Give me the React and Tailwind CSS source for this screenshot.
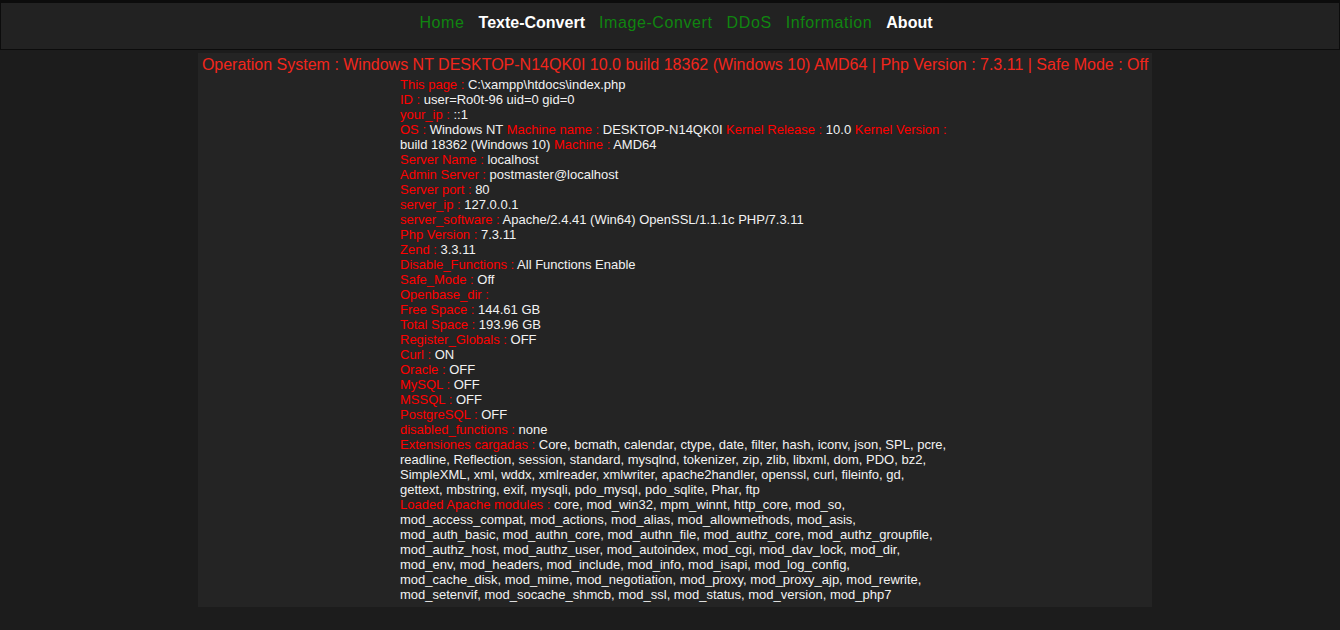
import React from 'react';

const navItems = [
  { label: 'Home', active: false },
  { label: 'Texte-Convert', active: true },
  { label: 'Image-Convert', active: false },
  { label: 'DDoS', active: false },
  { label: 'Information', active: false },
  { label: 'About', active: true },
];

// each entry is one visual line; parts alternate [label, value]
const lines = [
  [['This page : ', 'C:\\xampp\\htdocs\\index.php']],
  [['ID : ', 'user=Ro0t-96 uid=0 gid=0']],
  [['your_ip : ', '::1']],
  [
    ['OS : ', 'Windows NT '],
    ['Machine name : ', 'DESKTOP-N14QK0I '],
    ['Kernel Release : ', '10.0 '],
    ['Kernel Version : ', ''],
  ],
  [['', 'build 18362 (Windows 10) '], ['Machine : ', 'AMD64']],
  [['Server Name : ', 'localhost']],
  [['Admin Server : ', 'postmaster@localhost']],
  [['Server port : ', '80']],
  [['server_ip : ', '127.0.0.1']],
  [['server_software : ', 'Apache/2.4.41 (Win64) OpenSSL/1.1.1c PHP/7.3.11']],
  [['Php Version : ', '7.3.11']],
  [['Zend : ', '3.3.11']],
  [['Disable_Functions : ', 'All Functions Enable']],
  [['Safe_Mode : ', 'Off']],
  [['Openbase_dir : ', '']],
  [['Free Space : ', '144.61 GB']],
  [['Total Space : ', '193.96 GB']],
  [['Register_Globals : ', 'OFF']],
  [['Curl : ', 'ON']],
  [['Oracle : ', 'OFF']],
  [['MySQL : ', 'OFF']],
  [['MSSQL : ', 'OFF']],
  [['PostgreSQL : ', 'OFF']],
  [['disabled_functions : ', 'none']],
  [['Extensiones cargadas : ', 'Core, bcmath, calendar, ctype, date, filter, hash, iconv, json, SPL, pcre,']],
  [['', 'readline, Reflection, session, standard, mysqlnd, tokenizer, zip, zlib, libxml, dom, PDO, bz2,']],
  [['', 'SimpleXML, xml, wddx, xmlreader, xmlwriter, apache2handler, openssl, curl, fileinfo, gd,']],
  [['', 'gettext, mbstring, exif, mysqli, pdo_mysql, pdo_sqlite, Phar, ftp']],
  [['Loaded Apache modules : ', 'core, mod_win32, mpm_winnt, http_core, mod_so,']],
  [['', 'mod_access_compat, mod_actions, mod_alias, mod_allowmethods, mod_asis,']],
  [['', 'mod_auth_basic, mod_authn_core, mod_authn_file, mod_authz_core, mod_authz_groupfile,']],
  [['', 'mod_authz_host, mod_authz_user, mod_autoindex, mod_cgi, mod_dav_lock, mod_dir,']],
  [['', 'mod_env, mod_headers, mod_include, mod_info, mod_isapi, mod_log_config,']],
  [['', 'mod_cache_disk, mod_mime, mod_negotiation, mod_proxy, mod_proxy_ajp, mod_rewrite,']],
  [['', 'mod_setenvif, mod_socache_shmcb, mod_ssl, mod_status, mod_version, mod_php7']],
];

const App = () => {
  return (
    <div
      className="min-h-screen bg-[#1c1c1c]"
      style={{ fontFamily: '"Liberation Sans", Arial, sans-serif' }}
    >
      {/* Navigation */}
      <nav className="h-[50px] bg-[#222222] border border-t-[3px] border-[#0c0c0c] pt-[11px] pl-[12px]">
        <ul className="flex justify-center gap-[14px] text-[16px] leading-[18px]">
          {navItems.map((item) => (
            <li key={item.label}>
              <a
                href="#"
                className={
                  item.active
                    ? 'font-bold text-white'
                    : 'text-[#108510] tracking-[0.6px]'
                }
              >
                {item.label}
              </a>
            </li>
          ))}
        </ul>
      </nav>

      {/* Info panel */}
      <div className="pl-[10px] pt-[3px]">
        <div className="mx-auto w-[954px] bg-[#242424] pt-[3px] pb-[5px]">
          <h1 className="text-center text-[16px] leading-[18px] text-[#f2261c] whitespace-nowrap">
            Operation System : Windows NT DESKTOP-N14QK0I 10.0 build 18362 (Windows 10) AMD64 | Php Version : 7.3.11 | Safe Mode : Off
          </h1>

          <div className="mx-auto mt-[3px] w-[550px] text-[13px] leading-[15px]">
            {lines.map((parts, i) => (
              <div key={i} className="whitespace-nowrap">
                {parts.map(([label, value], j) => (
                  <React.Fragment key={j}>
                    {label && <span className="text-[#ff0000]">{label}</span>}
                    {value && <span className="text-[#f2f2f2]">{value}</span>}
                  </React.Fragment>
                ))}
              </div>
            ))}
          </div>
        </div>
      </div>
    </div>
  );
};

export default App;
